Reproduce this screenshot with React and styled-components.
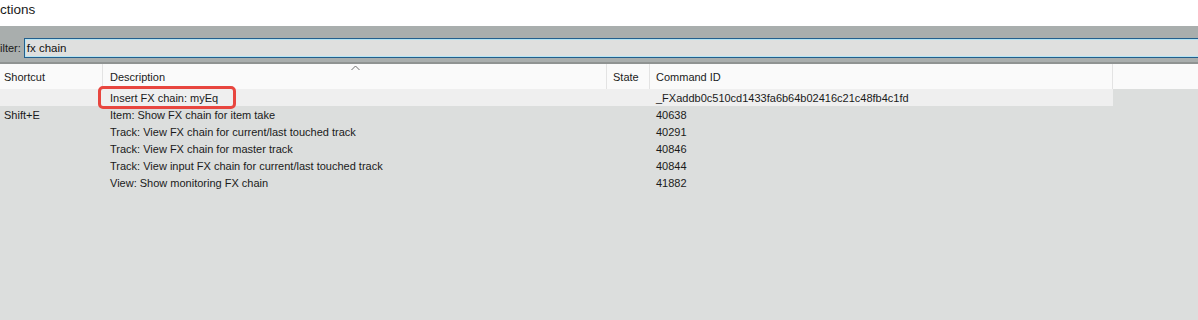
import React from "react";
import styled, { createGlobalStyle } from "styled-components";

const Global = createGlobalStyle`
  html, body { margin: 0; padding: 0; overflow: hidden; background: #dcdedd; }
  body { font-family: "Liberation Sans", Arial, sans-serif; }
`;

const Window = styled.div`
  width: 1198px;
  height: 320px;
  background: #dcdedd;
  display: flex;
  flex-direction: column;
  overflow: hidden;
`;

const TitleBar = styled.div`
  height: 26px;
  background: #ffffff;
  display: flex;
  align-items: flex-start;
  padding-top: 2px;
  box-sizing: border-box;
  font-size: 13.5px;
  line-height: 16px;
  color: #1a1a1a;
`;

const FilterBar = styled.div`
  height: 38px;
  background: #a9aead;
  border-bottom: 2px solid #8f9392;
  box-sizing: border-box;
  display: flex;
  align-items: flex-start;
  padding-top: 12px;
  gap: 3px;
`;

const FilterLabel = styled.label`
  font-size: 11px;
  line-height: 20px;
  color: #1a1a1a;
`;

const FilterInput = styled.div`
  flex: 1;
  margin-right: -20px;
  height: 20px;
  box-sizing: border-box;
  border: 1px solid #245f8c;
  box-shadow: inset 0 0 0 1px #b6e4f3;
  background: #dfe0df;
  font-size: 11.5px;
  color: #111;
  display: flex;
  align-items: center;
  padding-left: 2px;
`;

const COLS = [103, 504, 43, 463];

const HeaderRow = styled.div`
  height: 25px;
  background: #fafafa;
  display: flex;
  flex-shrink: 0;
`;

const HeaderCell = styled.div`
  position: relative;
  width: ${(p) => p.$w}px;
  flex: ${(p) => (p.$fill ? 1 : "none")};
  box-sizing: border-box;
  border-right: ${(p) => (p.$fill ? "none" : "1px solid #e3e3e3")};
  padding-left: ${(p) => p.$pad}px;
  display: flex;
  align-items: center;
  font-size: 11px;
  color: #1a1a1a;
  white-space: nowrap;
`;

const SortArrow = styled.svg`
  position: absolute;
  left: 248px;
  top: 1px;
`;

const Body = styled.div`
  display: flex;
  flex-direction: column;
`;

const Row = styled.div`
  height: 17px;
  display: flex;
  width: 1113px;
  background: ${(p) => (p.$hl ? "#efefef" : "transparent")};
`;

const Cell = styled.div`
  position: relative;
  width: ${(p) => p.$w}px;
  box-sizing: border-box;
  padding-left: ${(p) => p.$pad}px;
  display: flex;
  align-items: center;
  font-size: 11px;
  color: #1a1a1a;
  white-space: nowrap;
`;

const Callout = styled.div`
  position: absolute;
  left: -5px;
  top: -3px;
  width: 138px;
  height: 23px;
  box-sizing: border-box;
  border: 3px solid #e8463f;
  border-radius: 5px;
  pointer-events: none;
`;

const rows = [
  { sc: "", desc: "Insert FX chain: myEq", state: "", id: "_FXaddb0c510cd1433fa6b64b02416c21c48fb4c1fd", hl: true },
  { sc: "Shift+E", desc: "Item: Show FX chain for item take", state: "", id: "40638" },
  { sc: "", desc: "Track: View FX chain for current/last touched track", state: "", id: "40291" },
  { sc: "", desc: "Track: View FX chain for master track", state: "", id: "40846" },
  { sc: "", desc: "Track: View input FX chain for current/last touched track", state: "", id: "40844" },
  { sc: "", desc: "View: Show monitoring FX chain", state: "", id: "41882" },
];

export default function App() {
  return (
    <>
      <Global />
      <Window>
        <TitleBar>ctions</TitleBar>
        <FilterBar>
          <FilterLabel>ilter:</FilterLabel>
          <FilterInput>fx chain</FilterInput>
        </FilterBar>
        <HeaderRow>
          <HeaderCell $w={COLS[0]} $pad={4}>Shortcut</HeaderCell>
          <HeaderCell $w={COLS[1]} $pad={7}>
            Description
            <SortArrow width="9" height="6" viewBox="0 0 9 6">
              <polyline points="0.5,5 4.5,1 8.5,5" fill="none" stroke="#6f6f6f" strokeWidth="1" />
            </SortArrow>
          </HeaderCell>
          <HeaderCell $w={COLS[2]} $pad={6}>State</HeaderCell>
          <HeaderCell $w={COLS[3]} $pad={6}>Command ID</HeaderCell>
          <HeaderCell $fill $pad={0} />
        </HeaderRow>
        <Body>
          {rows.map((r, i) => (
            <Row key={i} $hl={r.hl}>
              <Cell $w={COLS[0]} $pad={4}>{r.sc}</Cell>
              <Cell $w={COLS[1]} $pad={7}>
                {r.desc}
                {r.hl && <Callout />}
              </Cell>
              <Cell $w={COLS[2]} $pad={6}>{r.state}</Cell>
              <Cell $w={COLS[3]} $pad={6}>{r.id}</Cell>
            </Row>
          ))}
        </Body>
      </Window>
    </>
  );
}
